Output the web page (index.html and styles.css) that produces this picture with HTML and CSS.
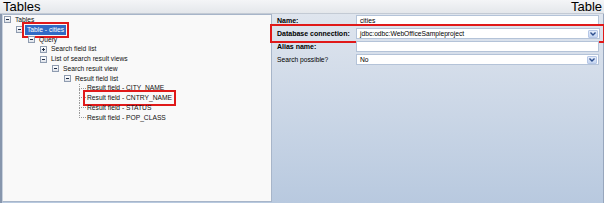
FILE: index.html
```html
<!DOCTYPE html>
<html>
<head>
<meta charset="utf-8">
<link rel="stylesheet" href="styles.css">
</head>
<body>
<div class="app">
  <div class="header">
    <span class="h-left">Tables</span>
    <span class="h-right">Table</span>
  </div>
  <div class="main">
    <div class="tree-panel">
      <div class="row lv0"><span class="exp minus"></span><span class="txt">Tables</span></div>
      <div class="row lv1"><span class="exp minus"></span><span class="txt sel">Table - cities</span></div>
      <div class="row lv2"><span class="exp minus"></span><span class="txt">Query</span></div>
      <div class="row lv3"><span class="exp plus"></span><span class="txt">Search field list</span></div>
      <div class="row lv3"><span class="exp minus"></span><span class="txt">List of search result views</span></div>
      <div class="row lv4"><span class="exp minus"></span><span class="txt">Search result view</span></div>
      <div class="row lv5"><span class="exp minus"></span><span class="txt">Result field list</span></div>
      <div class="row lv6 leaf"><span class="conn"></span><span class="txt">Result field - CITY_NAME</span></div>
      <div class="row lv6 leaf"><span class="conn"></span><span class="txt mark">Result field - CNTRY_NAME</span></div>
      <div class="row lv6 leaf"><span class="conn"></span><span class="txt">Result field - STATUS</span></div>
      <div class="row lv6 leaf last"><span class="conn"></span><span class="txt">Result field - POP_CLASS</span></div>
    </div>
    <div class="form-panel">
      <div class="frow">
        <span class="label bold">Name:</span>
        <span class="field">cities</span>
      </div>
      <div class="frow marked">
        <span class="label bold">Database connection:</span>
        <span class="field select">jdbc:odbc:WebOfficeSampleproject<span class="arrow"><svg width="8" height="6" viewBox="0 0 8 6"><path d="M1.5 1.5 L4 4 L6.5 1.5" fill="none" stroke="#2d4f8f" stroke-width="1.4"/></svg></span></span>
      </div>
      <div class="frow">
        <span class="label bold">Alias name:</span>
        <span class="field"></span>
      </div>
      <div class="frow">
        <span class="label">Search possible?</span>
        <span class="field select">No<span class="arrow"><svg width="8" height="6" viewBox="0 0 8 6"><path d="M1.5 1.5 L4 4 L6.5 1.5" fill="none" stroke="#2d4f8f" stroke-width="1.4"/></svg></span></span>
      </div>
    </div>
  </div>
</div>
</body>
</html>
```

FILE: styles.css
```css
html, body {
  margin: 0;
  padding: 0;
}
body {
  width: 604px;
  height: 203px;
  overflow: hidden;
  font-family: "Liberation Sans", Arial, sans-serif;
  color: #000;
}
.app {
  width: 604px;
  height: 203px;
  display: flex;
  flex-direction: column;
  background: #b9c9df;
}
.header {
  flex: none;
  display: flex;
  justify-content: space-between;
  align-items: center;
  background: linear-gradient(#f4f5f7, #e4e7eb);
  border-bottom: 1px solid #c3cad4;
  padding: 0 2px 0 3px;
  height: 13px;
  font-size: 13px;
  line-height: 13px;
}
.h-left, .h-right {
  display: block;
  line-height: 13px;
}
.main {
  flex: 1;
  display: flex;
  border-left: 2px solid #8796ad;
  border-right: 1px solid #97a6bd;
  padding-bottom: 1px;
  background: linear-gradient(#dfe5ee, #b8c9df);
}
.tree-panel {
  width: 270px;
  flex: none;
  box-sizing: border-box;
  background: #f9f9f9;
  border: 1px solid #a7b5c9;
  border-left-color: #c9d2de;
  font-size: 6.7px;
  color: #111;
}
.row {
  height: 9.8px;
  display: flex;
  align-items: center;
  white-space: nowrap;
}
.lv0 { padding-left: 1px; }
.lv1 { padding-left: 13px; }
.lv2 { padding-left: 25px; }
.lv3 { padding-left: 37px; }
.lv4 { padding-left: 49px; }
.lv5 { padding-left: 61px; }
.lv6 { padding-left: 73px; }
.exp {
  width: 7px;
  height: 7px;
  box-sizing: border-box;
  border: 1px solid #8f9cb0;
  background: linear-gradient(#ffffff, #dfe3ea);
  margin-right: 3px;
  display: flex;
  align-items: center;
  justify-content: center;
  flex: none;
}
.exp::before {
  content: "";
  width: 3px;
  height: 1px;
  background: #1d2b44;
}
.exp.plus {
  background: linear-gradient(90deg, transparent 2px, #1d2b44 2px, #1d2b44 3px, transparent 3px) center / 5px 3px no-repeat, linear-gradient(#ffffff, #dfe3ea);
}
.txt {
  line-height: 10px;
  padding: 0 1px;
}
.sel {
  background: #316ac5;
  color: #fff;
  padding: 0 2px;
  margin-left: -1px;
  outline: 2px solid #e01919;
  outline-offset: 1px;
}
.mark {
  outline: 2px solid #e01919;
  outline-offset: 1px;
}
.conn {
  width: 7px;
  height: 9.8px;
  flex: none;
  margin-left: 3px;
  display: flex;
  flex-direction: column;
  align-self: flex-start;
}
.conn::before {
  content: "";
  height: 5px;
  box-sizing: border-box;
  border-left: 1px dotted #9a9a9a;
  border-bottom: 1px dotted #9a9a9a;
}
.conn::after {
  content: "";
  flex: 1;
  border-left: 1px dotted #9a9a9a;
}
.last .conn::after {
  border-left: none;
}
.form-panel {
  flex: 1;
  display: flex;
  flex-direction: column;
  padding: 0 2px 0 1px;
}
.frow {
  height: 13px;
  display: flex;
  align-items: center;
  padding-left: 4px;
}
.frow.marked {
  outline: 2px solid #e01919;
  outline-offset: 1px;
  margin-right: -1px;
}
.label {
  width: 79px;
  flex: none;
  font-size: 6.7px;
  white-space: nowrap;
}
.label.bold {
  font-weight: bold;
  font-size: 7px;
}
.field {
  flex: 1;
  height: 11px;
  box-sizing: border-box;
  background: #fff;
  border: 1px solid #b4c3d8;
  font-size: 6.7px;
  line-height: 9px;
  padding-left: 3px;
  display: flex;
  align-items: center;
  white-space: nowrap;
  margin-right: 2px;
}
.select {
  justify-content: space-between;
  padding-right: 1px;
}
.arrow {
  width: 10px;
  height: 8px;
  box-sizing: border-box;
  border: 1px solid #b6c7e6;
  border-radius: 1px;
  background: linear-gradient(#e4ecfa, #c5d5f0);
  display: flex;
  align-items: center;
  justify-content: center;
}
.arrow svg {
  display: block;
}
```
